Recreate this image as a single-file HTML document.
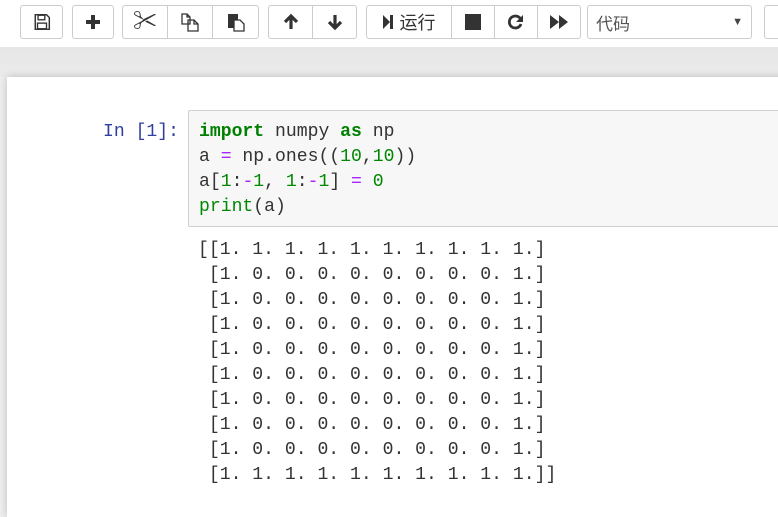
<!DOCTYPE html>
<html><head><meta charset="utf-8"><style>
*{margin:0;padding:0;box-sizing:border-box}
body{width:778px;height:503px;overflow:hidden;background:#eee;position:relative;font-family:"Liberation Sans","Noto Sans CJK SC",sans-serif}
.tb{position:absolute;left:0;top:0;width:778px;height:47px;background:#fff}
.grad{position:absolute;left:0;top:47px;width:778px;height:30px;background:linear-gradient(#e6e6e6,#ebebeb)}
.b{position:absolute;top:5px;height:34px;border:1px solid #ccc;border-radius:3px;background:#fff;display:flex;align-items:center;justify-content:center;color:#333}
.panel{position:absolute;left:7px;top:77px;width:790px;height:440px;background:#fff;box-shadow:0 0 8px rgba(0,0,0,.2)}
.mono{font-family:"Liberation Mono",monospace;font-size:18.1px;line-height:25px;white-space:pre;color:#333}
.prompt{position:absolute;left:103px;top:120px;color:#303f9f}
.cell{position:absolute;left:188px;top:110px;width:600px;height:117px;background:#f7f7f7;border:1px solid #cfcfcf;border-radius:2px;padding:9px 0 0 10px}
.k{color:#008000;font-weight:bold}.o{color:#aa22ff}.n{color:#080}
.out{position:absolute;left:198px;top:238px}
</style></head><body>
<div class="tb">
<div class="b" style="left:20px;width:43px"><svg width="18" height="18" viewBox="0 0 16 16"><path d="M2 1.5h10l2.5 2.5v10.5h-12.5z" fill="none" stroke="#333" stroke-width="1.3"/><rect x="4.5" y="2" width="6" height="4" fill="none" stroke="#333" stroke-width="1.2"/><rect x="4" y="9" width="8" height="5" fill="none" stroke="#333" stroke-width="1.2"/></svg></div>
<div class="b" style="left:72px;width:42px"><svg width="18" height="18"><path d="M9 2v14M2 9h14" stroke="#333" stroke-width="4"/></svg></div>
<div class="b" style="left:122px;width:46px;border-radius:3px 0 0 3px"><span style="font-size:24px;line-height:1">✂</span></div>
<div class="b" style="left:167px;width:46px;border-radius:0"><svg width="20" height="20"><path d="M2 2h5l3 3v7H2z M7 2v3h3 M8 8h6l4 4v7H8z M14 8v4h4" fill="#fff" stroke="#333" stroke-width="1.3"/></svg></div>
<div class="b" style="left:212px;width:47px;border-radius:0 3px 3px 0"><svg width="20" height="20"><rect x="2" y="2" width="10" height="14" fill="#333"/><path d="M8 8h6l4 4v7H8z" fill="#fff" stroke="#333" stroke-width="1.3"/></svg></div>
<div class="b" style="left:268px;width:45px;border-radius:3px 0 0 3px"><svg width="18" height="18"><path d="M9 16V4M3 9l6-6 6 6" fill="none" stroke="#333" stroke-width="3.2"/></svg></div>
<div class="b" style="left:312px;width:45px;border-radius:0 3px 3px 0"><svg width="18" height="18"><path d="M9 2v12M3 9l6 6 6-6" fill="none" stroke="#333" stroke-width="3.2"/></svg></div>
<div class="b" style="left:366px;width:86px;border-radius:3px 0 0 3px;font-size:18px"><svg width="12" height="18"><path d="M1 2l7 7-7 7z" fill="#333"/><rect x="8" y="2" width="3" height="14" fill="#333"/></svg>&nbsp;运行</div>
<div class="b" style="left:451px;width:44px;border-radius:0"><div style="width:16px;height:16px;background:#333"></div></div>
<div class="b" style="left:494px;width:44px;border-radius:0"><svg width="18" height="18"><path d="M14 7A6 6 0 1 0 14 11" fill="none" stroke="#333" stroke-width="2.8"/><path d="M16 2v7h-7z" fill="#333"/></svg></div>
<div class="b" style="left:537px;width:44px;border-radius:0 3px 3px 0"><svg width="20" height="18"><path d="M1 2l9 7-9 7zM10 2l9 7-9 7z" fill="#333"/></svg></div>
<div class="b" style="left:587px;width:165px;justify-content:space-between;padding:0 8px;font-size:17px;color:#555">代码<span style="font-size:11px;color:#444">▼</span></div>
<div class="b" style="left:764px;width:30px"></div>
</div>
<div class="grad"></div>
<div class="panel"></div>
<div class="prompt mono" style="color:#303f9f">In [1]:</div>
<div class="cell mono"><span class="k">import</span> numpy <span class="k">as</span> np
a <span class="o">=</span> np.ones((<span class="n">10</span>,<span class="n">10</span>))
a[<span class="n">1</span>:<span class="o">-</span><span class="n">1</span>, <span class="n">1</span>:<span class="o">-</span><span class="n">1</span>] <span class="o">=</span> <span class="n">0</span>
<span class="n">print</span>(a)</div>
<div class="out mono">[[1. 1. 1. 1. 1. 1. 1. 1. 1. 1.]
 [1. 0. 0. 0. 0. 0. 0. 0. 0. 1.]
 [1. 0. 0. 0. 0. 0. 0. 0. 0. 1.]
 [1. 0. 0. 0. 0. 0. 0. 0. 0. 1.]
 [1. 0. 0. 0. 0. 0. 0. 0. 0. 1.]
 [1. 0. 0. 0. 0. 0. 0. 0. 0. 1.]
 [1. 0. 0. 0. 0. 0. 0. 0. 0. 1.]
 [1. 0. 0. 0. 0. 0. 0. 0. 0. 1.]
 [1. 0. 0. 0. 0. 0. 0. 0. 0. 1.]
 [1. 1. 1. 1. 1. 1. 1. 1. 1. 1.]]</div>
</body></html>
